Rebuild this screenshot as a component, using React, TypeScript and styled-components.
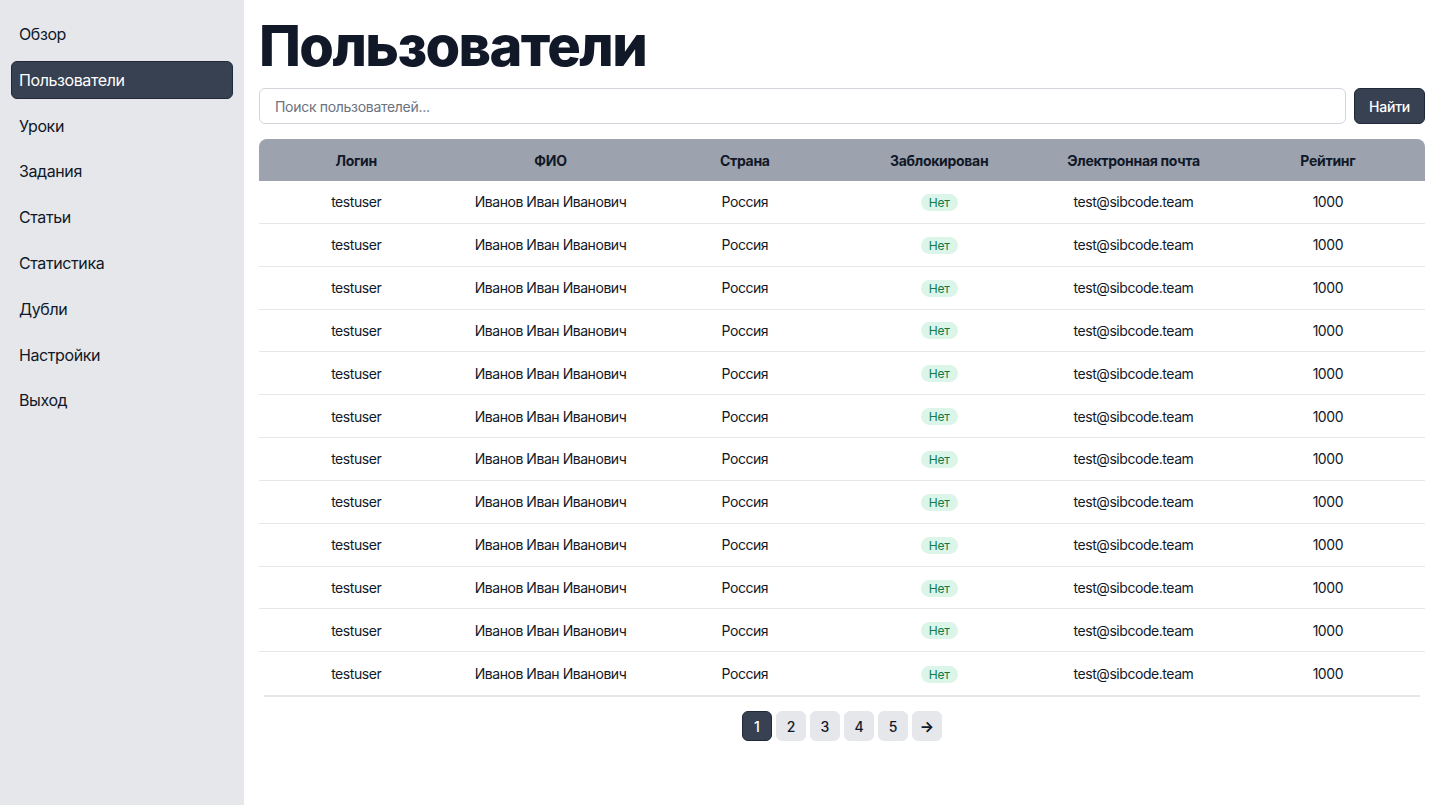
import React from "react";
import styled, { createGlobalStyle } from "styled-components";

const Global = createGlobalStyle`
  * { box-sizing: border-box; }
  html, body { margin: 0; padding: 0; }
  body { font-family: Inter, "Noto Sans", sans-serif; background: #ffffff; color: #111827; }
`;

const Layout = styled.div`
  display: flex;
  min-height: 805px;
`;

const Sidebar = styled.nav`
  width: 244px;
  flex-shrink: 0;
  background: #e5e7eb;
  padding: 15px 11px;
  display: flex;
  flex-direction: column;
  gap: 7.8px;
`;

const NavItem = styled.div<{ $active?: boolean }>`
  height: 38px;
  display: flex;
  align-items: center;
  padding: 0 7px;
  border-radius: 6px;
  font-size: 16px;
  letter-spacing: -0.4px;
  color: ${(p) => (p.$active ? "#ffffff" : "#111827")};
  background: ${(p) => (p.$active ? "#374151" : "transparent")};
  border: 1px solid ${(p) => (p.$active ? "#1f2937" : "transparent")};
`;

const Main = styled.main`
  flex: 1;
  padding: 14px 15px 20px;
  display: flex;
  flex-direction: column;
`;

const Title = styled.h1`
  margin: 0;
  font-size: 56px;
  font-weight: 800;
  line-height: 64px;
  letter-spacing: -1.6px;
  color: #111827;
`;

const SearchRow = styled.div`
  display: flex;
  gap: 8px;
  margin-top: 10px;
`;

const SearchInput = styled.input`
  flex: 1;
  height: 36px;
  border: 1px solid #d1d5db;
  border-radius: 6px;
  padding: 0 15px;
  font-family: inherit;
  font-size: 14px;
  letter-spacing: -0.3px;
  color: #111827;
  outline: none;
  &::placeholder { color: #6b7280; }
`;

const SearchButton = styled.button`
  width: 71px;
  height: 36px;
  background: #374151;
  color: #ffffff;
  border: 1px solid #1f2937;
  border-radius: 6px;
  font-family: inherit;
  font-size: 14px;
  font-weight: 500;
  letter-spacing: -0.2px;
`;

const Table = styled.div`
  margin-top: 15px;
  display: flex;
  flex-direction: column;
`;

const HeadRow = styled.div`
  display: grid;
  grid-template-columns: repeat(6, 1fr);
  height: 42px;
  align-items: center;
  background: #9ca3af;
  border-radius: 8px 8px 0 0;
`;

const HeadCell = styled.div`
  text-align: center;
  font-size: 14px;
  font-weight: 700;
  letter-spacing: -0.3px;
  color: #111827;
`;

const Row = styled.div<{ $last?: boolean }>`
  display: grid;
  grid-template-columns: repeat(6, 1fr);
  height: 42.85px;
  align-items: center;
  border-bottom: ${(p) => (p.$last ? "none" : "1px solid #e5e7eb")};
`;

const Cell = styled.div`
  text-align: center;
  font-size: 14px;
  letter-spacing: -0.45px;
  color: #111827;
`;

const Badge = styled.span`
  display: inline-block;
  padding: 0 8px;
  height: 17px;
  line-height: 17px;
  border-radius: 9px;
  background: #dcf5e9;
  color: #0f7a4a;
  font-size: 12px;
  letter-spacing: -0.2px;
`;

const Divider = styled.div`
  height: 2px;
  background: #e5e7eb;
  margin: 0 5px;
`;

const Pagination = styled.div`
  display: flex;
  justify-content: center;
  gap: 4px;
  margin-top: 14px;
`;

const PageButton = styled.button<{ $active?: boolean }>`
  width: 30px;
  height: 30px;
  border-radius: 6px;
  border: 1px solid ${(p) => (p.$active ? "#1f2937" : "#e5e7eb")};
  background: ${(p) => (p.$active ? "#374151" : "#e5e7eb")};
  color: ${(p) => (p.$active ? "#ffffff" : "#111827")};
  font-family: inherit;
  font-size: 14px;
  font-weight: 500;
  display: flex;
  align-items: center;
  justify-content: center;
  padding: 0;
`;

const Arrow = styled.span`
  font-size: 15px;
  font-weight: 700;
`;

const navItems = ["Обзор", "Пользователи", "Уроки", "Задания", "Статьи", "Статистика", "Дубли", "Настройки", "Выход"];
const headers = ["Логин", "ФИО", "Страна", "Заблокирован", "Электронная почта", "Рейтинг"];
const rows = Array.from({ length: 12 }, () => ({
  login: "testuser",
  name: "Иванов Иван Иванович",
  country: "Россия",
  email: "test@sibcode.team",
  rating: 1000,
}));

export default function App() {
  return (
    <>
      <Global />
      <Layout>
        <Sidebar>
          {navItems.map((n) => (
            <NavItem key={n} $active={n === "Пользователи"}>{n}</NavItem>
          ))}
        </Sidebar>
        <Main>
          <Title>Пользователи</Title>
          <SearchRow>
            <SearchInput placeholder="Поиск пользователей..." />
            <SearchButton>Найти</SearchButton>
          </SearchRow>
          <Table>
            <HeadRow>
              {headers.map((h) => (
                <HeadCell key={h}>{h}</HeadCell>
              ))}
            </HeadRow>
            {rows.map((r, i) => (
              <Row key={i} $last={i === rows.length - 1}>
                <Cell>{r.login}</Cell>
                <Cell>{r.name}</Cell>
                <Cell>{r.country}</Cell>
                <Cell><Badge>Нет</Badge></Cell>
                <Cell>{r.email}</Cell>
                <Cell>{r.rating}</Cell>
              </Row>
            ))}
            <Divider />
          </Table>
          <Pagination>
            {[1, 2, 3, 4, 5].map((p) => (
              <PageButton key={p} $active={p === 1}>{p}</PageButton>
            ))}
            <PageButton><Arrow>→</Arrow></PageButton>
          </Pagination>
        </Main>
      </Layout>
    </>
  );
}
